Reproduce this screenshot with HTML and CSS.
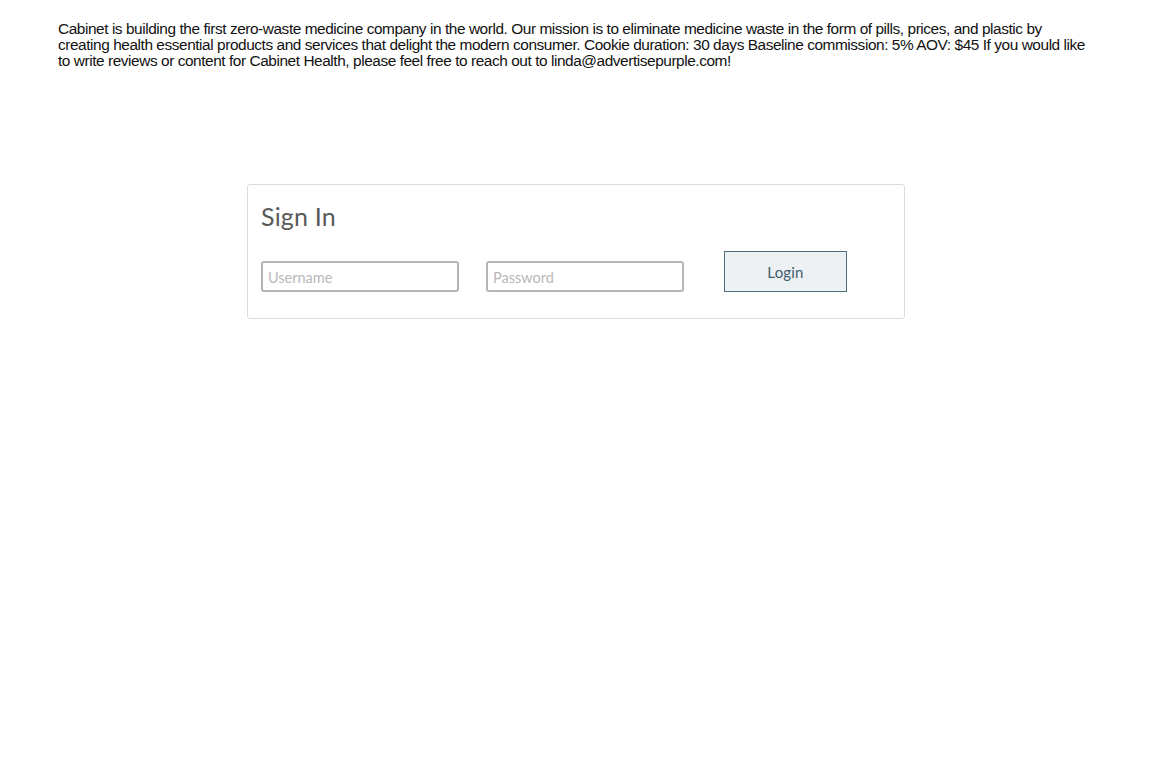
FILE: index.html
```html
<!DOCTYPE html>
<html lang="en">
<head>
<meta charset="utf-8">
<title>Sign In</title>
<link rel="stylesheet" href="styles.css">
</head>
<body>
<div class="page">
  <p class="intro">Cabinet is building the first zero-waste medicine company in the world. Our mission is to eliminate medicine waste in the form of pills, prices, and plastic by creating health essential products and services that delight the modern consumer. Cookie duration: 30 days Baseline commission: 5% AOV: $45 If you would like to write reviews or content for Cabinet Health, please feel free to reach out to linda@advertisepurple.com!</p>
  <div class="card">
    <h2 class="card-title">Sign In</h2>
    <form class="login-row">
      <input class="field" type="text" placeholder="Username">
      <input class="field" type="password" placeholder="Password">
      <button class="btn" type="button">Login</button>
    </form>
  </div>
</div>
</body>
</html>
```

FILE: styles.css
```css
html, body {
  margin: 0;
  padding: 0;
  background: #ffffff;
}

.page {
  padding: 21px 58px 0 58px;
}

.intro {
  margin: 0;
  font-family: "Liberation Sans", Arial, sans-serif;
  font-size: 15.4px;
  letter-spacing: -0.43px;
  line-height: 16px;
  color: #111;
}

.card {
  width: 658px;
  box-sizing: border-box;
  margin: 115px auto 0 auto;
  border: 1px solid #dcdcdc;
  border-radius: 3px;
  padding: 16px 13px 26px 13px;
}

.card-title {
  margin: 0;
  font-family: Lato, "Noto Sans", sans-serif;
  font-weight: 400;
  font-size: 25px;
  letter-spacing: 0.2px;
  line-height: 30px;
  color: #5a5a5a;
}

.login-row {
  display: flex;
  align-items: center;
  margin-top: 20px;
}

.field {
  width: 198px;
  height: 31px;
  box-sizing: border-box;
  border: 2px solid #b5b5b5;
  border-radius: 3px;
  padding: 2px 5px 0 5px;
  font-family: Lato, "Noto Sans", sans-serif;
  font-size: 14.5px;
  color: #333;
  background: #fff;
  margin-top: 10px;
}

.field + .field {
  margin-left: 27px;
}

.field::placeholder {
  color: #b8b8b8;
}

.btn {
  margin-left: 40px;
  width: 123px;
  height: 41px;
  box-sizing: border-box;
  border: 1px solid #4e6e7c;
  background: #eef1f3;
  color: #3f5c6c;
  font-family: Lato, "Noto Sans", sans-serif;
  font-size: 15px;
  letter-spacing: 0.2px;
  border-radius: 0;
  padding: 0;
}
```
